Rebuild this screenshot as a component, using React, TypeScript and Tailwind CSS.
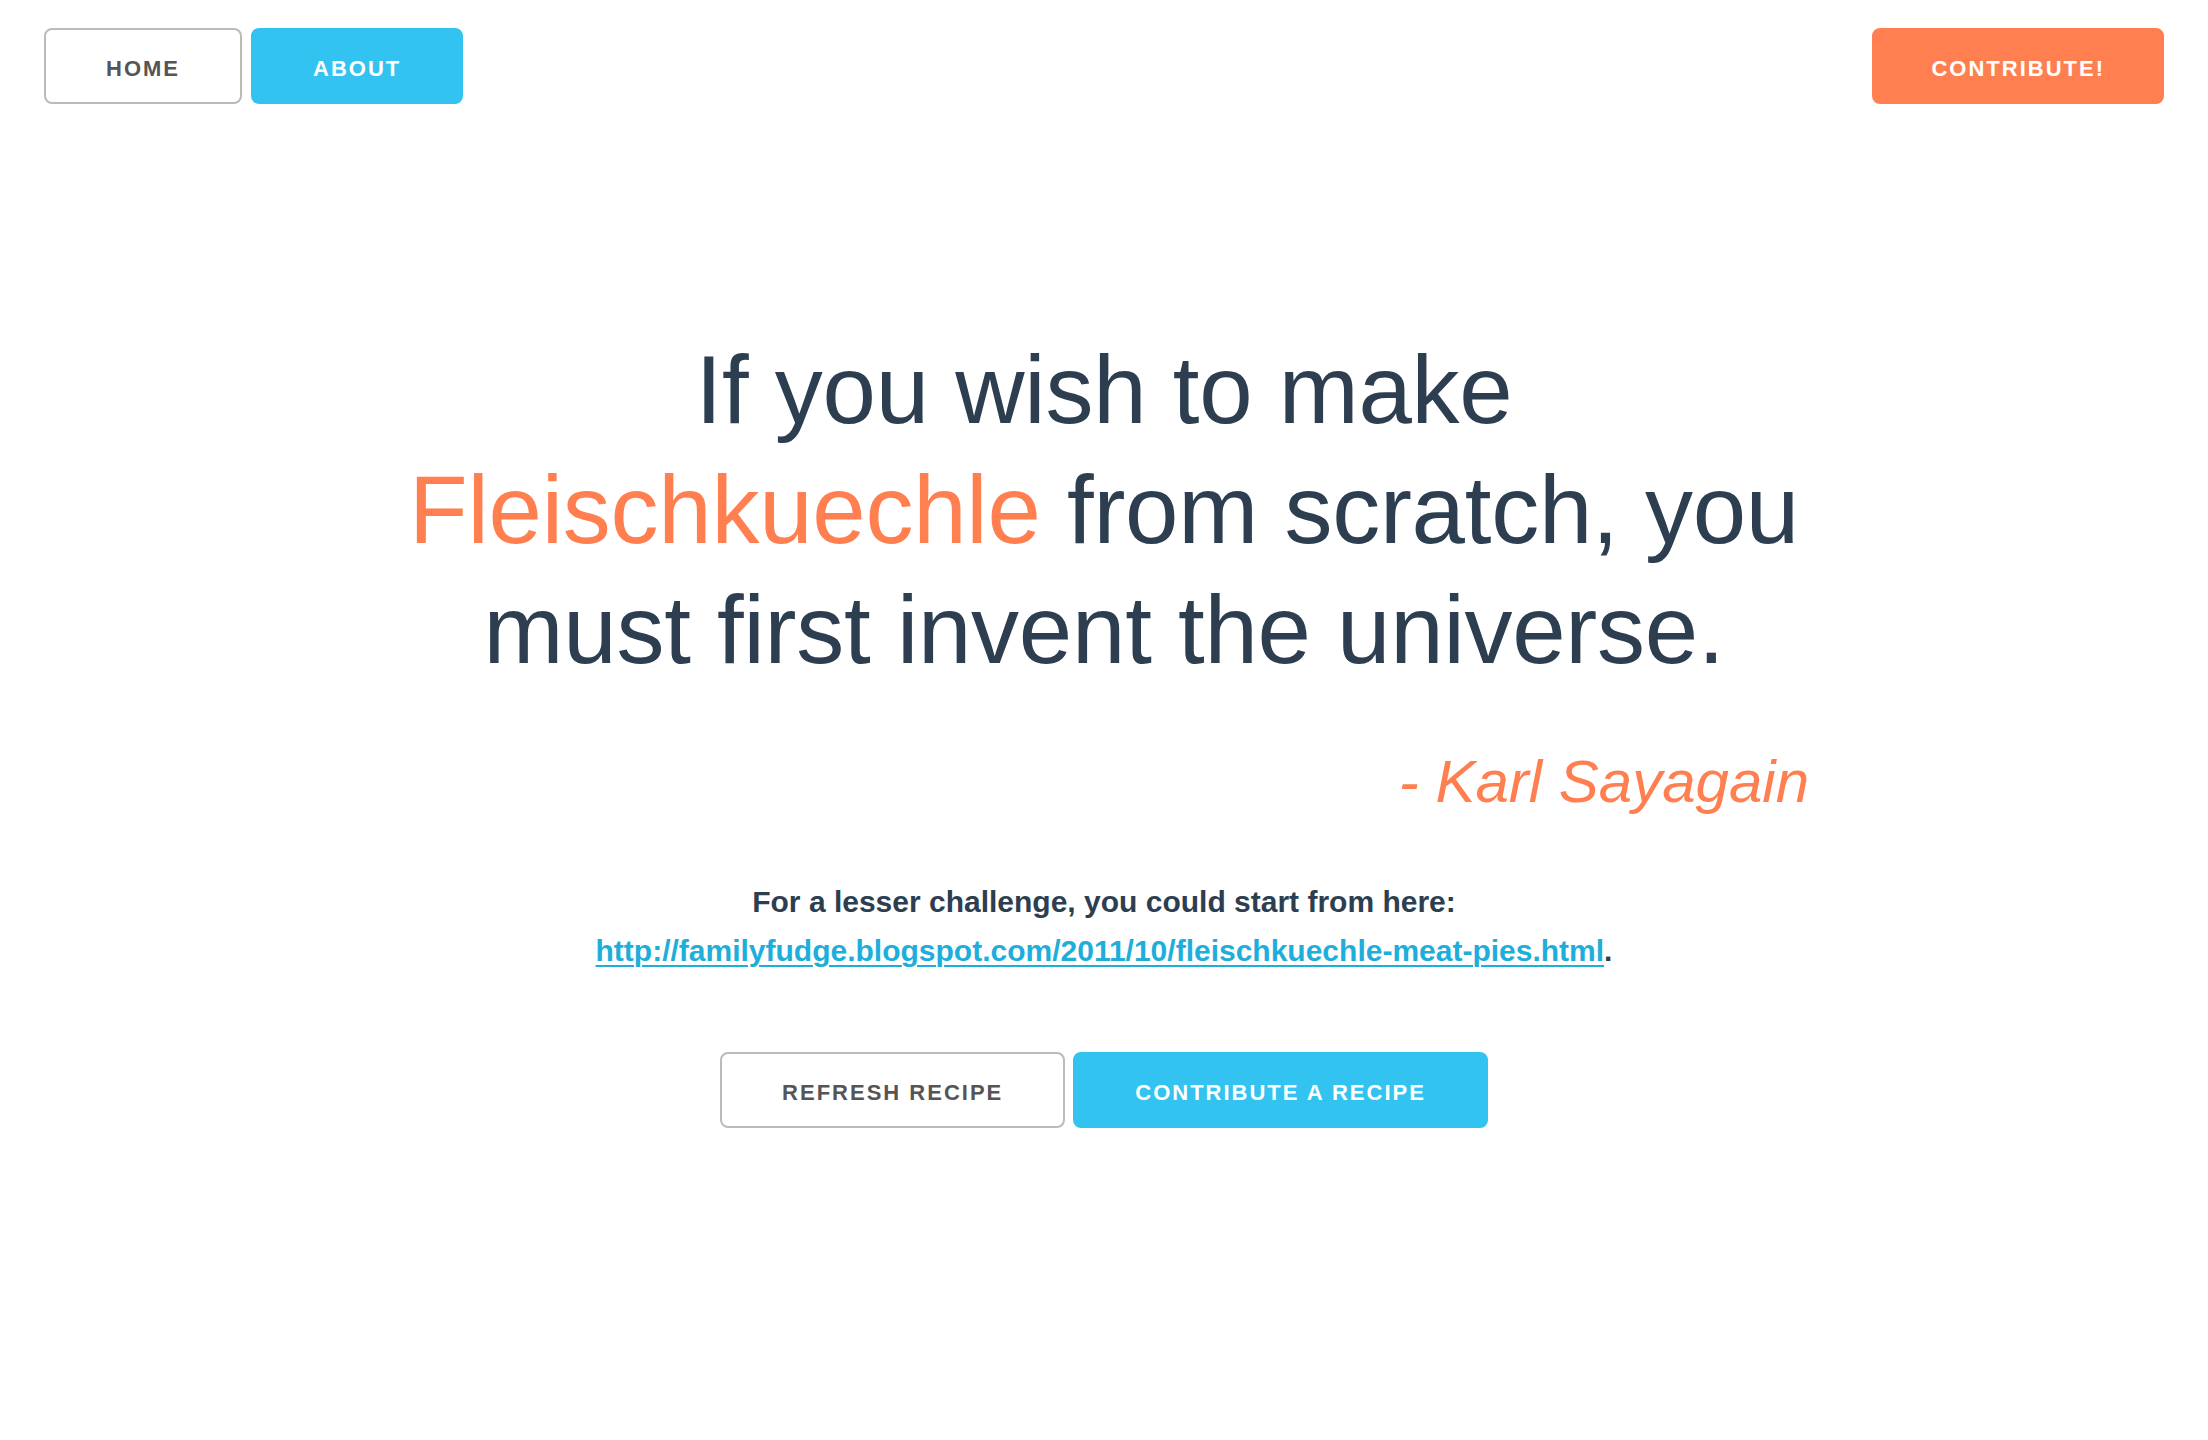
import React from "react";

const btn =
  "h-[76px] pt-[5px] border-2 rounded-[8px] text-[22px] font-bold tracking-[2px] uppercase flex items-center justify-center";

export default function App() {
  return (
    <div
      className="min-h-screen bg-white text-[#2c3e50]"
      style={{ fontFamily: '"Liberation Sans", Arial, sans-serif' }}
    >
      <div className="flex justify-between px-[44px] pt-[28px]">
        <div className="flex gap-[9px]">
          <button className={`${btn} px-[60px] border-[#bbbbbb] bg-white text-[#555555]`}>Home</button>
          <button className={`${btn} px-[60px] border-[#33c3f0] bg-[#33c3f0] text-white`}>About</button>
        </div>
        <button className={`${btn} px-[57px] tracking-[1.7px] border-[#ff7f50] bg-[#ff7f50] text-white`}>
          Contribute!
        </button>
      </div>

      <div className="w-[1410px] mx-auto mt-[226px]">
        <h1 className="text-center text-[96px] leading-[120px] font-normal tracking-[-0.25px] text-[#2c3e50]">
          If you wish to make <span className="text-[#ff7f50]">Fleischkuechle</span> from scratch, you
          must first invent the universe.
        </h1>
        <div className="mt-[54px] text-right italic text-[60px] leading-[75px] text-[#ff7f50]">
          - Karl Sayagain
        </div>
      </div>

      <div className="mt-[58px] text-center text-[30px] leading-[49px] font-bold text-[#2c3e50]">
        <div>For a lesser challenge, you could start from here:</div>
        <div>
          <a
            href="#"
            className="text-[#1eaedb] underline underline-offset-[4px] decoration-2"
          >
            http://familyfudge.blogspot.com/2011/10/fleischkuechle-meat-pies.html
          </a>
          .
        </div>
      </div>

      <div className="flex justify-center gap-[8px] mt-[77px]">
        <button className={`${btn} px-[60px] border-[#bbbbbb] bg-white text-[#555555]`}>
          Refresh Recipe
        </button>
        <button className={`${btn} px-[60px] border-[#33c3f0] bg-[#33c3f0] text-white`}>
          Contribute a Recipe
        </button>
      </div>
    </div>
  );
}
